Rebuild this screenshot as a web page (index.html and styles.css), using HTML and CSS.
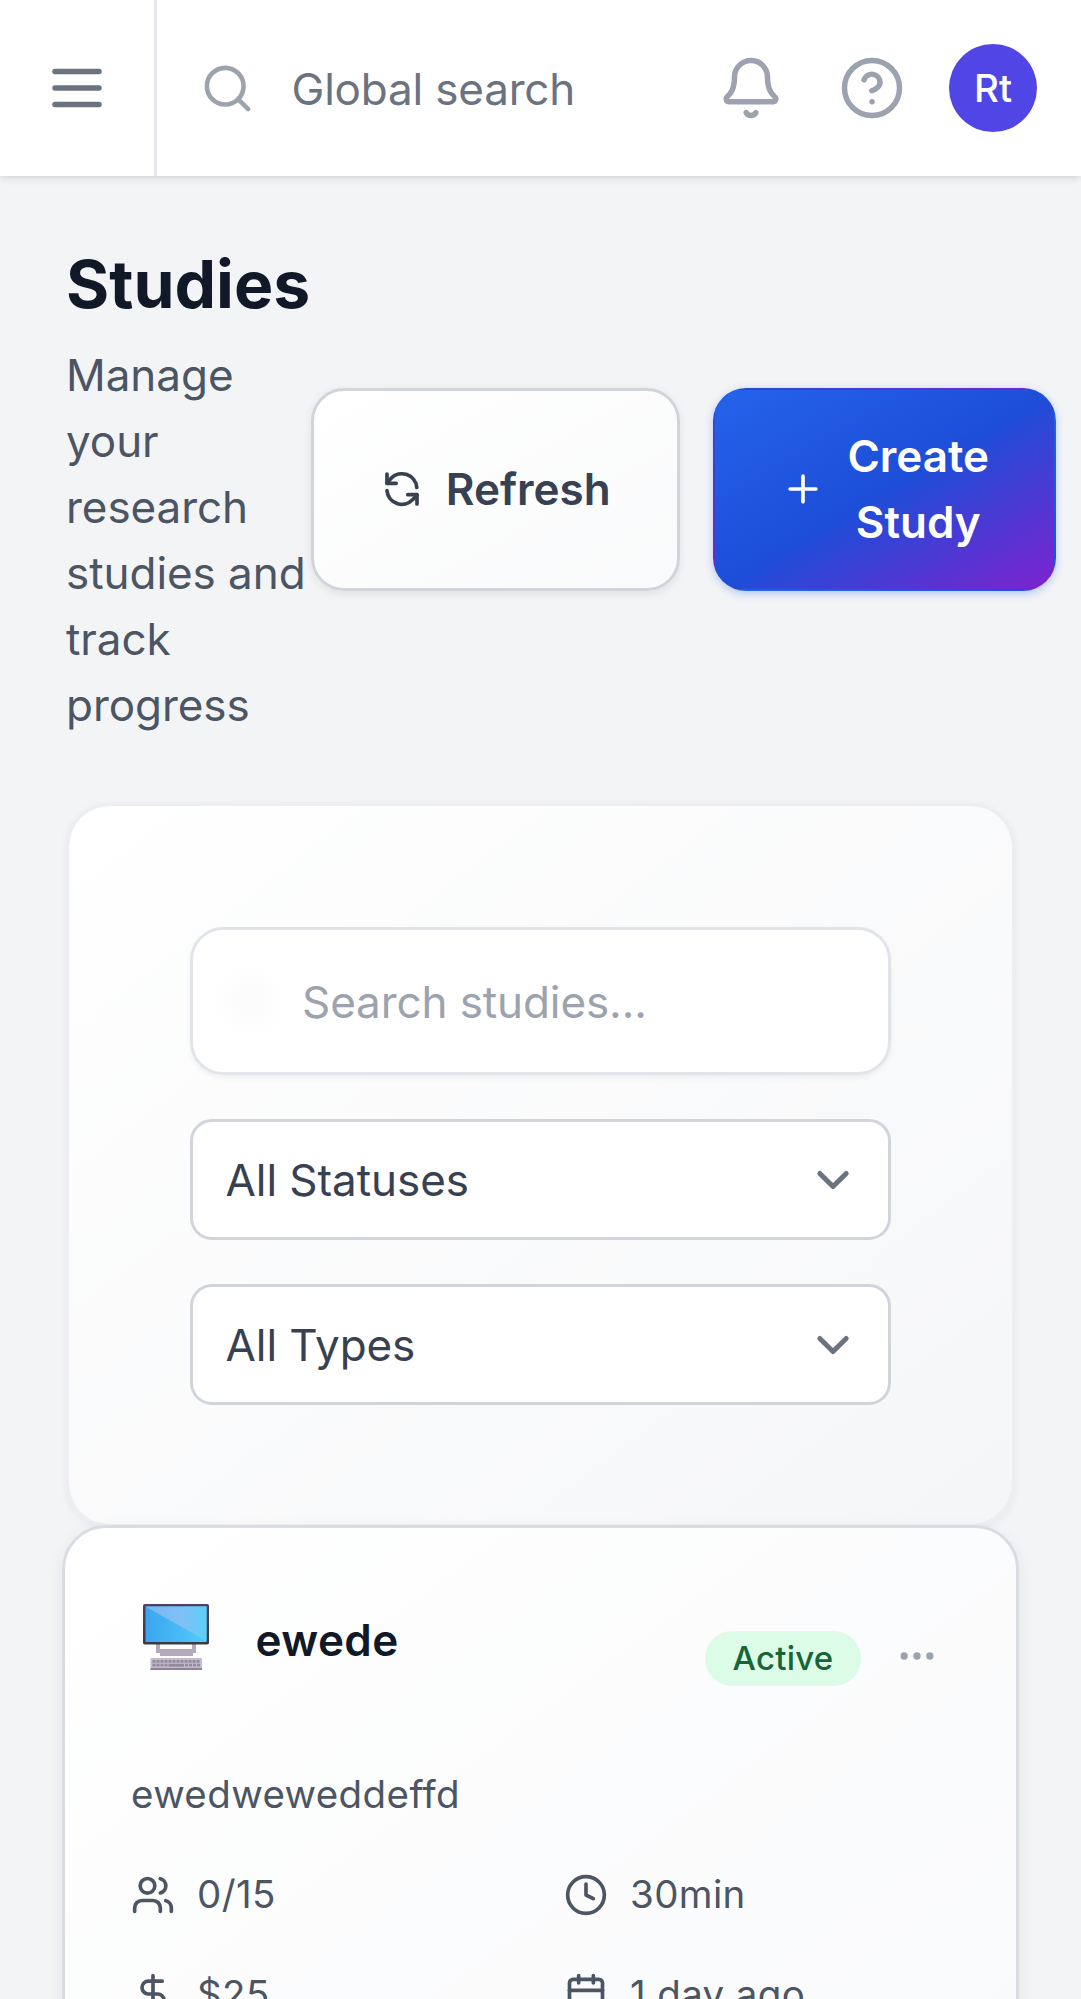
FILE: index.html
```html
<!DOCTYPE html>
<html lang="en">
<head>
<meta charset="utf-8">
<title>Studies</title>
<link rel="stylesheet" href="styles.css">
</head>
<body>
<header class="topbar">
  <button class="menu-btn" aria-label="Open menu">
    <svg class="icon icon-lg" viewBox="0 0 24 24"><path d="M4 6h16M4 12h16M4 18h16"/></svg>
  </button>
  <div class="global-search">
    <svg class="icon icon-md" viewBox="0 0 24 24"><circle cx="11" cy="11" r="8"/><path d="m21 21-4.35-4.35"/></svg>
    <span>Global search</span>
  </div>
  <div class="topbar-actions">
    <svg class="icon icon-lg" viewBox="0 0 24 24"><path d="M10.268 21a2 2 0 0 0 3.464 0"/><path d="M3.262 15.326A1 1 0 0 0 4 17h16a1 1 0 0 0 .74-1.673C19.41 13.956 18 12.499 18 8A6 6 0 0 0 6 8c0 4.499-1.411 5.956-2.738 7.326"/></svg>
    <svg class="icon icon-lg" viewBox="0 0 24 24"><circle cx="12" cy="12" r="10"/><path d="M9.09 9a3 3 0 0 1 5.83 1c0 2-3 3-3 3"/><path d="M12 17h.01"/></svg>
    <div class="avatar">Rt</div>
  </div>
</header>
<main class="page">
  <section class="page-head">
    <div class="page-title">
      <h1>Studies</h1>
      <p>Manage your research studies and track progress</p>
    </div>
    <div class="page-actions">
      <button class="btn btn-secondary">
        <svg class="icon icon-sm icon-refresh" viewBox="0 0 44 44"><path d="M36.800 20.500A15 15 0 0 0 11 11.400L7 16.200"/><path d="M7 7v9.300h9.200"/><path d="M7 23.700A15 15 0 0 0 32.800 32.600L37 27.800"/><path d="M37 37v-9.300h-9.200"/></svg>
        <span>Refresh</span>
      </button>
      <button class="btn btn-primary">
        <svg class="icon icon-sm" viewBox="0 0 24 24"><path d="M5 12h14M12 5v14"/></svg>
        <span>Create Study</span>
      </button>
    </div>
  </section>
  <section class="filters">
    <div class="search-field">Search studies...</div>
    <div class="select"><span>All Statuses</span><svg class="chevron" viewBox="0 0 20 20"><path d="M6 8l4 4 4-4"/></svg></div>
    <div class="select"><span>All Types</span><svg class="chevron" viewBox="0 0 20 20"><path d="M6 8l4 4 4-4"/></svg></div>
  </section>
  <article class="study">
    <div class="study-head">
      <svg class="computer" viewBox="0 0 66 66">
        <defs>
          <linearGradient id="screen" x1="0" y1="0" x2="1" y2="0"><stop offset="0" stop-color="#3ba5ee"/><stop offset="1" stop-color="#52cdfb"/></linearGradient>
          <linearGradient id="glare" x1="0" y1="0" x2="1" y2="0"><stop offset="0" stop-color="#79b8f2"/><stop offset=".6" stop-color="#7fc0f5"/><stop offset="1" stop-color="#5dcff8"/></linearGradient>
          <linearGradient id="bezel" x1="0" y1="0" x2="0" y2="1"><stop offset="0" stop-color="#533f66"/><stop offset="1" stop-color="#3b3947"/></linearGradient>
        </defs>
        <path fill="#b3aabb" d="M13 40h4v5h32v-5h4v9h-3v3H17v-3h-4z"/>
        <path fill="#fff" d="M17 40h32v4.500H17z"/>
        <rect width="66" height="40.500" rx="1.800" fill="url(#bezel)"/>
        <path fill="url(#screen)" d="M2.500 2.500h61v35.500h-61z"/>
        <path fill="url(#glare)" d="M2.500 2.500h61V37z"/>
        <rect x="7.500" y="54" width="51.500" height="12" rx="1" fill="#c4bccb"/>
        <path fill="#8f7da3" d="M7.500 64h51.500v2H7.500z"/>
        <path stroke="#938b9b" stroke-width="2.800" stroke-dasharray="3 1" d="M9.500 57.300h48M9.500 61.200h16M42 61.200h15"/>
        <path fill="#938b9b" d="M25.500 59.800h15.500v2.800H25.500z"/>
      </svg>
      <h2>ewede</h2>
      <div class="study-meta">
        <span class="badge">Active</span>
        <svg class="icon icon-sm dots" viewBox="0 0 24 24"><circle cx="5" cy="12" r="1"/><circle cx="12" cy="12" r="1"/><circle cx="19" cy="12" r="1"/></svg>
      </div>
    </div>
    <p class="study-desc">ewedweweddeffd</p>
    <div class="stats">
      <div class="stat"><svg class="icon icon-sm" viewBox="0 0 24 24"><path d="M16 21v-2a4 4 0 0 0-4-4H6a4 4 0 0 0-4 4v2"/><circle cx="9" cy="7" r="4"/><path d="M22 21v-2a4 4 0 0 0-3-3.870"/><path d="M16 3.130a4 4 0 0 1 0 7.750"/></svg>0/15</div>
      <div class="stat"><svg class="icon icon-sm" viewBox="0 0 24 24"><circle cx="12" cy="12" r="10"/><path d="M12 6v6l4 2"/></svg>30min</div>
      <div class="stat"><svg class="icon icon-sm" viewBox="0 0 24 24"><path d="M12 2v20"/><path d="M17 5H9.500a3.500 3.500 0 0 0 0 7h5a3.500 3.500 0 0 1 0 7H6"/></svg>$25</div>
      <div class="stat"><svg class="icon icon-sm" viewBox="0 0 24 24"><path d="M8 2v4M16 2v4"/><rect x="3" y="4" width="18" height="18" rx="2"/><path d="M3 10h18"/></svg>1 day ago</div>
    </div>
  </article>
</main>
</body>
</html>
```
FILE: styles.css
```css
* { box-sizing: border-box; margin: 0; padding: 0; }

body {
  height: 1999px;
  overflow: hidden;
  background: #f3f4f6;
  color: #111827;
  font: 44px/66px Inter, "Liberation Sans", sans-serif;
}

button { font: inherit; border: 0; background: none; }

.icon {
  display: block;
  flex: none;
  fill: none;
  stroke: currentColor;
  stroke-width: 2;
  stroke-linecap: round;
  stroke-linejoin: round;
}
.icon-lg { width: 66px; height: 66px; }
.icon-md { width: 55px; height: 55px; }
.icon-sm { width: 44px; height: 44px; }
.icon-refresh { stroke-width: 3.700; }

.topbar {
  display: flex;
  height: 176px;
  background: #fff;
  box-shadow: 0 2.750px 8.250px rgba(0, 0, 0, .1), 0 2.750px 5.500px -2.750px rgba(0, 0, 0, .1);
}
.menu-btn {
  flex: none;
  width: 156.500px;
  padding: 0 44px;
  border-right: 3px solid #e5e7eb;
  color: #6b7280;
}
.global-search {
  display: flex;
  flex: 1;
  align-items: center;
  gap: 36.500px;
  padding-left: 43.500px;
  color: #9ca3af;
}
.global-search span {
  padding-top: 2px;
  color: #6b7280;
  letter-spacing: -.180px;
}
.topbar-actions {
  display: flex;
  align-items: center;
  gap: 55px;
  padding-right: 44px;
  color: #9ca3af;
}
.avatar {
  width: 88px;
  height: 88px;
  margin-left: -11px;
  border-radius: 50%;
  background: #4f46e5;
  color: #fff;
  font-size: 38.500px;
  font-weight: 500;
  line-height: 88px;
  text-align: center;
}

.page { padding: 66px; }
.page-head {
  display: flex;
  align-items: center;
  margin-bottom: 65px;
}
.page-title { flex: none; width: 245px; }
h1 { font-size: 66px; line-height: 84px; font-weight: 700; }
.page-title p {
  margin: 16px -10px 0 0;
  padding-right: 10px;
  color: #4b5563;
  letter-spacing: -.050px;
}
.page-actions { display: flex; flex: none; gap: 33px; margin-bottom: 2px; }
.btn {
  display: flex;
  flex: none;
  align-items: center;
  justify-content: center;
  gap: 22px;
  height: 203px;
  border: 3px solid transparent;
  border-radius: 33px;
  font-weight: 600;
}
.btn-secondary {
  width: 368.500px;
  border-color: #d1d5db;
  background: linear-gradient(to bottom right, #fff, #f9fafb);
  color: #374151;
  box-shadow: 0 2.750px 8.250px rgba(0, 0, 0, .08);
}
.btn-primary {
  width: 343.500px;
  padding: 0 65px 0 67px;
  border-width: 2px;
  background: linear-gradient(to bottom right, #2563eb 0%, #1d4ed8 50%, #7e22ce 100%);
  color: #fff;
  box-shadow: 0 2.750px 8.250px rgba(37, 99, 235, .3);
}

.filters {
  display: flex;
  flex-direction: column;
  gap: 44px;
  height: 724px;
  padding: 121px 121px 118px;
  border: 3px solid rgba(229, 231, 235, .5);
  border-radius: 44px;
  background: linear-gradient(to bottom right, #fff, #f5f6f8) padding-box;
  box-shadow: 0 2.750px 8.250px rgba(0, 0, 0, .05);
}
.search-field {
  flex: none;
  height: 148px;
  padding: 39px 0 0 109px;
  border: 3px solid #e1e4e8;
  border-radius: 33px;
  background: radial-gradient(circle at 57px 71px, #fcfcfc 10px, #fff 38px);
  box-shadow: 0 2.750px 5.500px rgba(0, 0, 0, .05);
  color: #9ca3af;
  letter-spacing: -.100px;
}
.select {
  display: flex;
  flex: none;
  align-items: center;
  justify-content: space-between;
  height: 121px;
  padding: 0 22px 0 32.500px;
  border: 3px solid #d1d5db;
  border-radius: 22px;
  background: #fff;
  color: #374151;
  letter-spacing: -.050px;
}
.chevron {
  width: 66px;
  height: 66px;
  fill: none;
  stroke: #6b7280;
  stroke-width: 1.500;
  stroke-linecap: round;
  stroke-linejoin: round;
}

.study {
  height: 700px;
  margin: -2px -4px 0;
  padding: 66px;
  border: 3px solid #d9dce2;
  border-radius: 44px;
  background: linear-gradient(to bottom right, #fff, #f8f9fb);
  box-shadow: 0 5.500px 16px rgba(0, 0, 0, .07);
}
.study-head { display: flex; align-items: flex-start; }
.computer { width: 66px; height: 66px; margin: 10px 46.500px 0 12px; }
h2 {
  margin-top: 13px;
  font-size: 44px;
  line-height: 66px;
  font-weight: 600;
  letter-spacing: .400px;
}
.study-meta {
  display: flex;
  align-items: center;
  gap: 34px;
  margin: 37px 11px 0 auto;
}
.badge {
  height: 55px;
  padding: 0 27.500px;
  border-radius: 28px;
  background: #dcfce7;
  color: #166534;
  font-size: 33px;
  font-weight: 500;
  line-height: 55px;
  letter-spacing: .250px;
}
.dots { color: #9ca3af; margin-top: -6px; }
.study-desc {
  margin-top: 81px;
  color: #4b5563;
  font-size: 38.500px;
  line-height: 55px;
  letter-spacing: .400px;
}
.stats {
  display: grid;
  grid-template-columns: 1fr 1fr;
  gap: 44.500px 47px;
  margin-top: 45px;
}
.stat {
  display: flex;
  align-items: center;
  gap: 22px;
  color: #4b5563;
  font-size: 38.500px;
  line-height: 55px;
  letter-spacing: .370px;
}
```
